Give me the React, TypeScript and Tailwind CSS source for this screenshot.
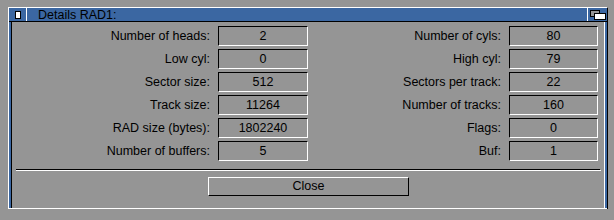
import React from "react";

const rows: [string, string, string, string][] = [
  ["Number of heads:", "2", "Number of cyls:", "80"],
  ["Low cyl:", "0", "High cyl:", "79"],
  ["Sector size:", "512", "Sectors per track:", "22"],
  ["Track size:", "11264", "Number of tracks:", "160"],
  ["RAD size (bytes):", "1802240", "Flags:", "0"],
  ["Number of buffers:", "5", "Buf:", "1"],
];

function Field({ value, w }: { value: string; w: string }) {
  return (
    <div
      className={`${w} h-[20px] flex items-center justify-center border-t border-l border-t-black border-l-black border-b border-r border-b-white border-r-white`}
    >
      {value}
    </div>
  );
}

export default function App() {
  return (
    <div
      className="w-[614px] h-[220px] bg-[#959595] pl-[8px] pt-[7px] text-black text-[12.5px] leading-none"
      style={{ fontFamily: '"Liberation Sans", Arial, sans-serif' }}
    >
      <div className="w-[600px] flex flex-col border-t border-l border-r border-t-white border-l-white border-r-black">
        {/* title bar */}
        <div className="h-[14px] flex bg-[#3b67a2] border-b border-b-black">
          <div className="w-[18px] h-full flex items-center justify-center border-r border-r-white">
            <div className="w-[6px] h-[8px] bg-white border border-black" />
          </div>
          <div className="flex-1 pl-[11px] flex items-center pt-[1px]">Details RAD1:</div>
          <div className="w-[20px] h-full border-l border-l-white relative">
            <div className="absolute left-[2px] top-[2px] w-[10px] h-[7px] bg-[#959595] border border-black" />
            <div className="absolute left-[6px] top-[5px] w-[12px] h-[7px] bg-white border border-black" />
          </div>
        </div>
        {/* body */}
        <div className="flex h-[186px]">
          <div className="w-[3px] flex">
            <div className="w-[2px] bg-[#3b67a2]" />
            <div className="w-[1px] bg-black" />
          </div>
          <div className="flex-1 flex flex-col pt-[4px]">
            <div className="flex flex-col gap-[3px]">
              {rows.map((r, i) => (
                <div key={i} className="flex items-center h-[20px]">
                  <div className="w-[198px] text-right">{r[0]}</div>
                  <div className="ml-[8px]">
                    <Field value={r[1]} w="w-[90px]" />
                  </div>
                  <div className="w-[193px] text-right">{r[2]}</div>
                  <div className="ml-[8px]">
                    <Field value={r[3]} w="w-[89px]" />
                  </div>
                </div>
              ))}
            </div>
            <div className="mt-[8px] ml-[4px] w-[585px] h-[2px] flex flex-col">
              <div className="h-[1px] w-[584px] bg-black" />
              <div className="h-[1px] w-[585px] bg-white" />
            </div>
            <div className="mt-[6px] ml-[196px] w-[201px] h-[19px] flex items-center justify-center border-t border-l border-t-white border-l-white border-b border-r border-b-black border-r-black">
              Close
            </div>
          </div>
          <div className="w-[3px] flex">
            <div className="w-[1px] bg-white" />
            <div className="w-[2px] bg-[#3b67a2]" />
          </div>
        </div>
        <div className="h-[1px] bg-white" />
      </div>
    </div>
  );
}
